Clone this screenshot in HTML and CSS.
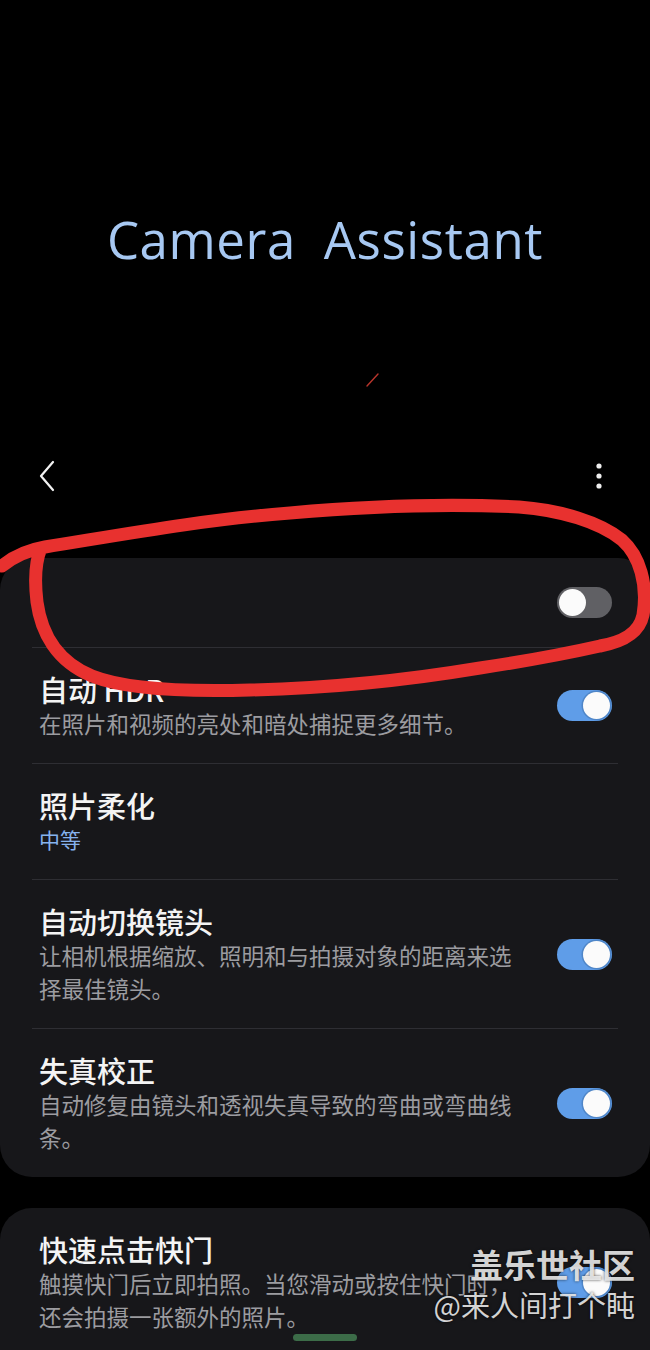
FILE: index.html
```html
<!DOCTYPE html>
<html lang="zh-CN">
<head>
<meta charset="utf-8">
<title>Camera Assistant</title>
<link rel="stylesheet" href="styles.css">
</head>
<body>
<div class="screen">
  <header class="hero">
    <h1 class="hero-title">Camera&nbsp; Assistant</h1>
  </header>
  <nav class="appbar">
    <svg class="back" width="20" height="32" viewBox="0 0 20 32"><path d="M15 2 L3 16 L15 30" fill="none" stroke="#f2f2f2" stroke-width="2.2" stroke-linecap="round" stroke-linejoin="round"/></svg>
    <svg class="more" width="8" height="28" viewBox="0 0 8 28"><circle cx="4" cy="4" r="2.6" fill="#eee"/><circle cx="4" cy="14" r="2.6" fill="#eee"/><circle cx="4" cy="24" r="2.6" fill="#eee"/></svg>
  </nav>

  <section class="card">
    <div class="row row-empty">
      <div class="text"></div>
      <span class="switch off"><span class="knob"></span></span>
    </div>
    <div class="divider"></div>
    <div class="row">
      <div class="text">
        <div class="title">自动 HDR</div>
        <div class="sub">在照片和视频的亮处和暗处捕捉更多细节。</div>
      </div>
      <span class="switch on"><span class="knob"></span></span>
    </div>
    <div class="divider"></div>
    <div class="row">
      <div class="text">
        <div class="title">照片柔化</div>
        <div class="value">中等</div>
      </div>
    </div>
    <div class="divider"></div>
    <div class="row">
      <div class="text">
        <div class="title">自动切换镜头</div>
        <div class="sub">让相机根据缩放、照明和与拍摄对象的距离来选<br>择最佳镜头。</div>
      </div>
      <span class="switch on"><span class="knob"></span></span>
    </div>
    <div class="divider"></div>
    <div class="row">
      <div class="text">
        <div class="title">失真校正</div>
        <div class="sub">自动修复由镜头和透视失真导致的弯曲或弯曲线<br>条。</div>
      </div>
      <span class="switch on"><span class="knob"></span></span>
    </div>
  </section>

  <section class="card card-second">
    <div class="row">
      <div class="text">
        <div class="title">快速点击快门</div>
        <div class="sub">触摸快门后立即拍照。当您滑动或按住快门时，<br>还会拍摄一张额外的照片。</div>
      </div>
      <span class="switch on"><span class="knob"></span></span>
    </div>
  </section>

  <div class="navpill"></div>

  <div class="watermark">
    <div class="wm-big">盖乐世社区</div>
    <div class="wm-small">@来人间打个盹</div>
  </div>

  <svg class="scribble" width="650" height="1350" viewBox="0 0 650 1350">
    <path d="M2 566 C 14 556, 28 550, 45 547 C 120 535, 200 520, 290 513 C 370 506, 440 503, 519 507 C 560 510, 600 522, 622 540 C 640 556, 648 585, 643 615 C 639 634, 622 642, 600 646 C 560 655, 520 662, 480 668 C 420 678, 340 688, 250 690 C 180 692, 122 688, 92 676 C 56 661, 41 632, 37 602 C 34 577, 36 560, 41 548" fill="none" stroke="#e8312f" stroke-width="13" stroke-linecap="round" stroke-linejoin="round"/>
    <path d="M367 386 L378 374" stroke="#b8352c" stroke-width="1.4" stroke-linecap="round"/>
  </svg>
</div>
</body>
</html>
```

FILE: styles.css
```css
* { box-sizing: border-box; }
html, body { margin: 0; padding: 0; background: #000; }
body {
  width: 650px;
  height: 1350px;
  overflow: hidden;
  font-family: "Noto Sans CJK SC", "Noto Sans", sans-serif;
}
.screen {
  position: relative;
  width: 650px;
  height: 1350px;
  overflow: hidden;
}
.hero {
  height: 440px;
  padding-top: 207px;
  display: flex;
  justify-content: center;
  align-items: flex-start;
}
.hero-title {
  margin: 0;
  font-family: "Open Sans", "DejaVu Sans", sans-serif;
  font-weight: 400;
  font-size: 51px;
  line-height: 64px;
  color: #a7c8f2;
  letter-spacing: 0.6px;
}
.appbar {
  height: 72px;
  display: flex;
  align-items: center;
  justify-content: space-between;
  padding: 0 47px 0 38px;
}
.back { display: block; }
.more { display: block; }
.card {
  margin-top: 46px;
  background: #17171a;
  border-radius: 32px;
}
.card-second {
  margin-top: 31px;
  border-radius: 32px 32px 0 0;
  min-height: 200px;
}
.row {
  display: flex;
  align-items: center;
  justify-content: space-between;
  padding: 23px 38px 23px 39px;
}
.row-empty {
  height: 89px;
  padding-top: 0;
  padding-bottom: 0;
}
.text { flex: 1; }
.title {
  color: #f4f4f4;
  font-size: 29px;
  line-height: 36px;
  font-weight: 500;
}
.sub {
  color: #9c9ca0;
  font-size: 22.5px;
  line-height: 33px;
  font-weight: 400;
}
.value {
  color: #86b2ee;
  font-size: 21px;
  line-height: 33px;
}
.divider {
  height: 1px;
  margin: 0 32px;
  background: #2e2e33;
}
.switch {
  flex: none;
  width: 55px;
  height: 31px;
  border-radius: 16px;
  display: flex;
  align-items: center;
  padding: 0 2px;
}
.switch .knob {
  width: 27px;
  height: 27px;
  border-radius: 50%;
  background: #fbfbfb;
}
.switch.off { background: #606064; justify-content: flex-start; }
.switch.on { background: #5f9de8; justify-content: flex-end; }
.switch.on .knob { box-shadow: 0 0 0 1.5px #4f86c8; }
.navpill {
  position: absolute;
  left: 293px;
  top: 1334px;
  width: 64px;
  height: 7px;
  border-radius: 4px;
  background: #3c6c48;
}
.watermark {
  position: absolute;
  right: 15px;
  top: 1243px;
  text-align: right;
  color: rgba(240, 240, 240, 0.88);
  text-shadow: 0 0 3px rgba(0,0,0,0.7);
}
.wm-big {
  font-size: 33px;
  line-height: 42px;
  font-weight: 700;
}
.wm-small {
  font-size: 29px;
  line-height: 38px;
  font-weight: 400;
}
.scribble {
  position: absolute;
  left: 0;
  top: 0;
  pointer-events: none;
}
```
